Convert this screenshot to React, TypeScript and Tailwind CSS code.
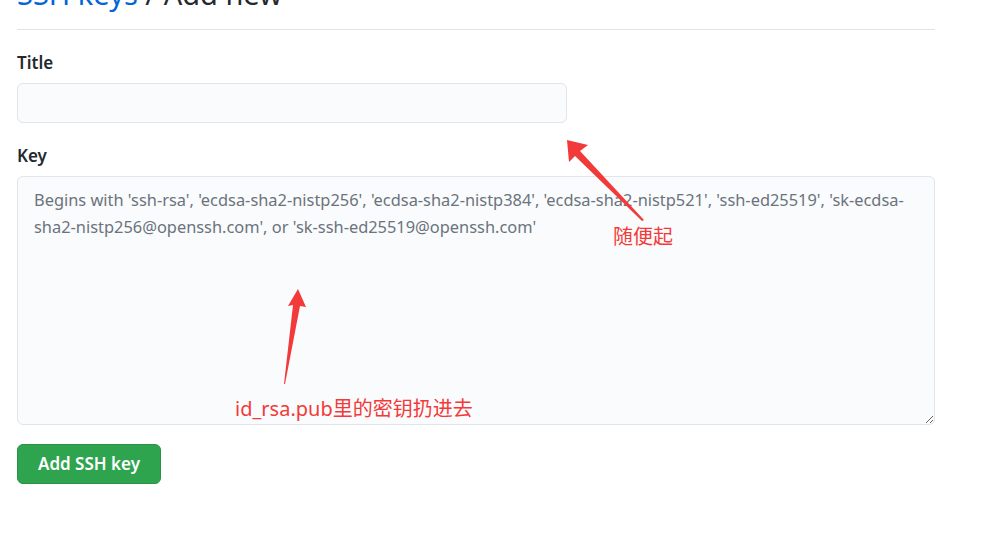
import React from "react"

const font = { fontFamily: '"Noto Sans", "Noto Sans CJK SC", sans-serif' }

const Annotations = () => (
    <svg className="absolute left-0 top-0 pointer-events-none" width="988" height="534" viewBox="0 0 988 534">
        {/* arrow to title input */}
        <polygon points="567,140 588,145 580,151 644,220 642,221 575,156 569,162" fill="#f33a3a" />
        {/* arrow to key textarea */}
        <polygon points="298,289 306,307 300,306 285,384 284,384 293,305 288,306" fill="#f33a3a" />
    </svg>
)

export default function App() {
    return (
        <div className="relative w-[988px] h-[534px] bg-white overflow-hidden" style={font}>
            <div className="ml-[17px] w-[918px]">
                <div className="-mt-[25px] pb-[16px] border-b border-[#e1e4e8] text-[29px] leading-[38px] font-normal">
                    <a className="text-[#0366d6]">SSH keys</a>
                    <span className="text-[#24292e]"> / Add new</span>
                </div>

                <div className="mt-[20px]">
                    <label className="block text-[17px] leading-[26px] font-semibold text-[#24292e]">Title</label>
                    <input
                        type="text"
                        className="mt-[7px] block w-[550px] h-[40px] rounded-[6px] border border-[#e1e4e8] bg-[#fafbfc] px-[15px] text-[17px] outline-none"
                    />
                </div>

                <div className="mt-[20px]">
                    <label className="block text-[17px] leading-[26px] font-semibold text-[#24292e]">Key</label>
                    <textarea
                        className="mt-[7px] block w-[918px] h-[249px] rounded-[6px] border border-[#e1e4e8] bg-[#fafbfc] px-[16px] py-[9px] text-[16.4px] leading-[27px] text-[#24292e] placeholder:text-[#6a737d] outline-none"
                        style={font}
                        placeholder="Begins with 'ssh-rsa', 'ecdsa-sha2-nistp256', 'ecdsa-sha2-nistp384', 'ecdsa-sha2-nistp521', 'ssh-ed25519', 'sk-ecdsa-sha2-nistp256@openssh.com', or 'sk-ssh-ed25519@openssh.com'"
                    />
                </div>

                <button className="mt-[19px] h-[40px] w-[144px] rounded-[6px] bg-[#2ea44f] border border-[#2a9147] text-white text-[17px] font-semibold">
                    Add SSH key
                </button>
            </div>

            <Annotations />
            <span className="absolute left-[613px] top-[223px] text-[20px] leading-[28px] text-[#f33a3a]">随便起</span>
            <span className="absolute left-[235px] top-[395px] text-[20px] leading-[28px] text-[#f33a3a]">id_rsa.pub里的密钥扔进去</span>
        </div>
    )
}
